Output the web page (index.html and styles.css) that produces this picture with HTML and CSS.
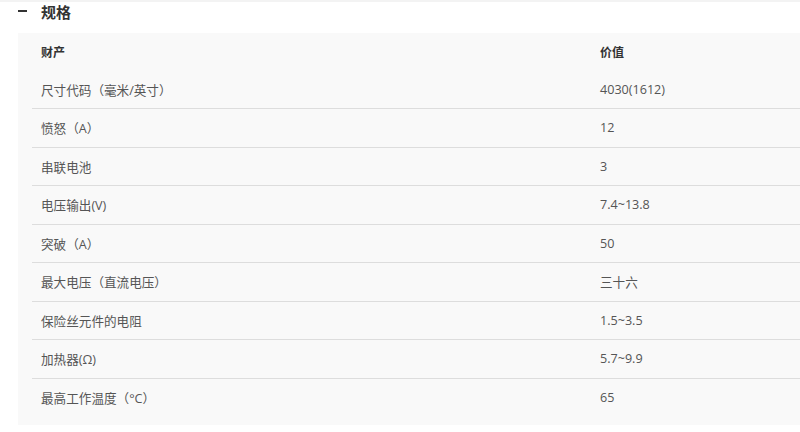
FILE: index.html
```html
<!DOCTYPE html>
<html lang="zh">
<head>
<meta charset="utf-8">
<link rel="stylesheet" href="styles.css">
</head>
<body>
<div class="topstrip"></div>
<section class="specs">
  <h2 class="specs-title"><span class="toggle"></span><span>规格</span></h2>
  <div class="table-wrap">
    <div class="table">
      <div class="row head"><div class="cell">财产</div><div class="cell">价值</div></div>
      <div class="row"><div class="cell">尺寸代码（毫米/英寸）</div><div class="cell">4030(1612)</div></div>
      <div class="row"><div class="cell">愤怒（A）</div><div class="cell">12</div></div>
      <div class="row"><div class="cell">串联电池</div><div class="cell">3</div></div>
      <div class="row"><div class="cell">电压输出(V)</div><div class="cell">7.4~13.8</div></div>
      <div class="row"><div class="cell">突破（A）</div><div class="cell">50</div></div>
      <div class="row"><div class="cell">最大电压（直流电压）</div><div class="cell">三十六</div></div>
      <div class="row"><div class="cell">保险丝元件的电阻</div><div class="cell">1.5~3.5</div></div>
      <div class="row"><div class="cell">加热器(Ω)</div><div class="cell">5.7~9.9</div></div>
      <div class="row last"><div class="cell">最高工作温度（°C）</div><div class="cell">65</div></div>
    </div>
  </div>
</section>
</body>
</html>
```
FILE: styles.css
```css
html, body {
  margin: 0;
  padding: 0;
  background: #ffffff;
}
body {
  font-family: "Open Sans", "Noto Sans CJK SC", sans-serif;
  color: #555555;
  font-size: 12.6px;
  overflow: hidden;
}
.topstrip {
  height: 2px;
  background: #f3f3f3;
}
.specs {
  padding-left: 18px;
}
.specs-title {
  display: flex;
  align-items: center;
  height: 18px;
  margin: 0;
  font-size: 15px;
  font-weight: bold;
  color: #333333;
  font-family: "Noto Sans CJK SC", sans-serif;
}
.toggle {
  display: block;
  width: 9px;
  height: 2px;
  background: #333333;
  margin-right: 14px;
}
.table-wrap {
  margin-top: 13px;
  background: #f9f9f9;
  padding: 0 0 8px 14px;
}
.table {
  display: flex;
  flex-direction: column;
}
.row {
  display: grid;
  grid-template-columns: 559px 1fr;
  height: 38.5px;
  box-sizing: border-box;
  border-bottom: 1px solid #dddddd;
  align-items: center;
}
.row.head {
  height: 37.5px;
  border-bottom: none;
  font-weight: bold;
  font-size: 12px;
  color: #333333;
}
.row.last {
  border-bottom: none;
}
.cell {
  padding-left: 9px;
  white-space: nowrap;
}
```
